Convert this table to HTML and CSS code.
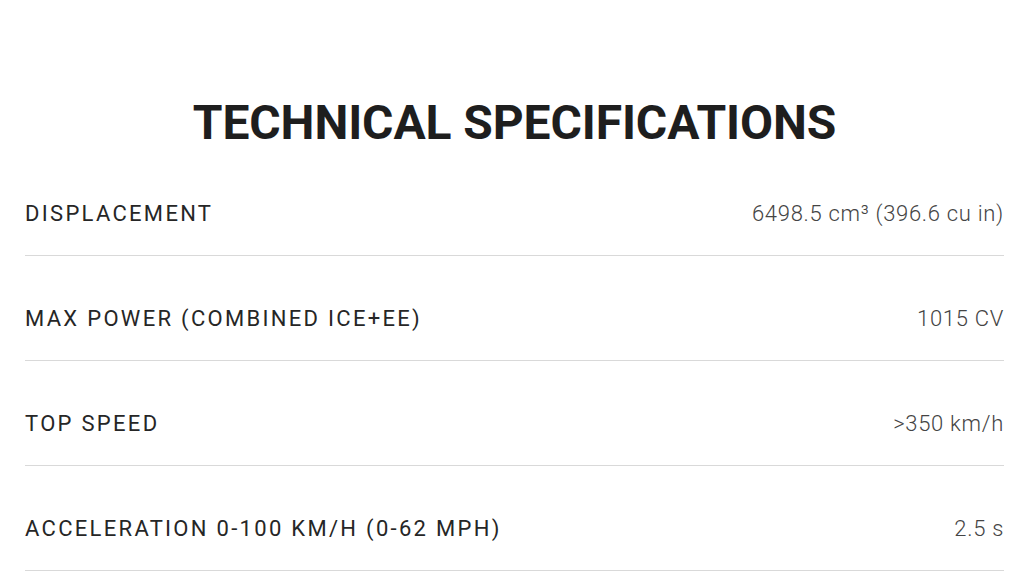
FILE: index.html
```html
<!DOCTYPE html>
<html lang="en">
<head>
<meta charset="utf-8">
<link rel="stylesheet" href="styles.css">
</head>
<body>
<section class="specs">
  <h2 class="specs-title">TECHNICAL SPECIFICATIONS</h2>
  <div class="spec-row"><span class="spec-label">DISPLACEMENT</span><span class="spec-value">6498.5 cm³ (396.6 cu in)</span></div>
  <div class="spec-row"><span class="spec-label">MAX POWER (COMBINED ICE+EE)</span><span class="spec-value">1015 CV</span></div>
  <div class="spec-row"><span class="spec-label">TOP SPEED</span><span class="spec-value">&gt;350 km/h</span></div>
  <div class="spec-row"><span class="spec-label">ACCELERATION 0-100 KM/H (0-62 MPH)</span><span class="spec-value">2.5 s</span></div>
</section>
</body>
</html>
```
FILE: styles.css
```css
html, body { margin: 0; padding: 0; background: #fff; }
body { font-family: Roboto, "Liberation Sans", sans-serif; color: #222; }
.specs { padding: 0 20px 0 25px; }
.specs-title {
  margin: 0;
  padding-top: 94px;
  height: 57px;
  font-size: 48px;
  line-height: 57px;
  font-weight: 700;
  letter-spacing: -0.1px;
  text-align: center;
  color: #1e1e1e;
  box-sizing: content-box;
}
.spec-row {
  display: flex;
  justify-content: space-between;
  align-items: center;
  padding: 50px 0 28px;
  border-bottom: 1px solid #d9d9d9;
}
.spec-label {
  font-size: 22px;
  line-height: 26px;
  letter-spacing: 2.3px;
  color: #262626;
}
.spec-value {
  font-size: 22px;
  line-height: 26px;
  font-weight: 300;
  letter-spacing: 0.7px;
  color: #444;
}
```
